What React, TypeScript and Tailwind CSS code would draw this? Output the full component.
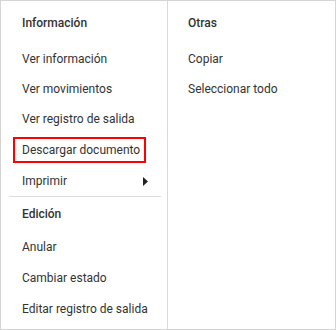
import React from "react";

const Item = ({ children, h = "h-[30px]" }: { children: React.ReactNode; h?: string }) => (
  <div className={`${h} flex items-center pl-[21px] text-[12px] text-[#333333] whitespace-nowrap`}>{children}</div>
);

export default function App() {
  return (
    <div
      className="w-[336px] h-[330px] bg-white border border-[#d4d4d4] flex"
      style={{ fontFamily: "Roboto, 'Liberation Sans', sans-serif" }}
    >
      <div className="w-[167px] border-r border-[#d9d9d9] flex flex-col pt-[7px]">
        <div className="h-[30px] flex items-center pl-[21px] text-[12px] font-medium text-[#333333]">Información</div>
        <div className="h-[6px]" />
        <Item>Ver información</Item>
        <Item>Ver movimientos</Item>
        <Item>Ver registro de salida</Item>
        <div className="h-[32px] flex items-center pl-[12px]">
          <div className="h-[26px] w-[133px] border-2 border-[#ff0000] flex items-center pl-[7px] text-[12px] text-[#333333] whitespace-nowrap">
            Descargar documento
          </div>
        </div>
        <div className="h-[30px] flex items-center justify-between pl-[21px] pr-[19px] text-[12px] text-[#333333]">
          <span>Imprimir</span>
          <svg width="5" height="9" viewBox="0 0 5 9">
            <path d="M0 0 L5 4.5 L0 9 Z" fill="#222" />
          </svg>
        </div>
        <div className="h-px bg-[#dcdcdc] ml-[8px] mr-[6px]" />
        <div className="h-[33px] flex items-center pl-[21px] text-[12px] font-medium text-[#333333]">Edición</div>
        <div className="h-[1px]" />
        <Item h="h-[31px]">Anular</Item>
        <Item h="h-[31px]">Cambiar estado</Item>
        <Item h="h-[31px]">Editar registro de salida</Item>
      </div>
      <div className="flex-1 flex flex-col pt-[7px]">
        <div className="h-[30px] flex items-center pl-[20px] text-[12px] font-medium text-[#333333]">Otras</div>
        <div className="h-[6px]" />
        <div className="h-[30px] flex items-center pl-[20px] text-[12px] text-[#333333]">Copiar</div>
        <div className="h-[30px] flex items-center pl-[20px] text-[12px] text-[#333333]">Seleccionar todo</div>
      </div>
    </div>
  );
}
